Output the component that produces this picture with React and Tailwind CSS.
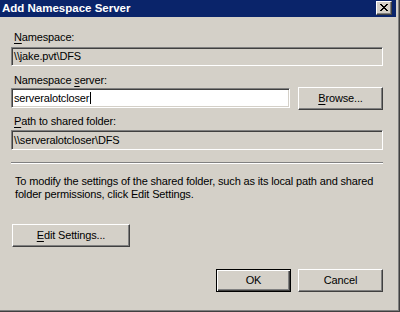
export default function App() {
  return (
    <div className="w-[400px] h-[312px] bg-[#d4d0c8] border-r border-b border-[#404040] shadow-[inset_-1px_-1px_0_#808080] pr-[3px] pb-[3px] flex flex-col text-[11px] leading-[13px] text-black tracking-[-0.15px] font-['Liberation_Sans',Arial,sans-serif] overflow-hidden">
      {/* Title bar */}
      <div className="h-[17px] shrink-0 bg-[#0a246a] flex items-start justify-between pl-[2px] pr-[4px]">
        <span className="text-white font-bold text-[11.5px] leading-[17px] tracking-[0px]">Add Namespace Server</span>
        <div className="mt-[1px] w-[16px] h-[14px] bg-[#d4d0c8] border border-t-white border-l-white border-b-[#404040] border-r-[#404040] shadow-[inset_-1px_-1px_0_#808080] flex items-center justify-center">
          <svg width="8" height="7" viewBox="0 0 8 7" shapeRendering="crispEdges" className="mb-[1px]">
            <path
              fill="#000"
              d="M0 0h2v1H0z M6 0h2v1H6z M1 1h2v1H1z M5 1h2v1H5z M2 2h4v1H2z M3 3h2v1H3z M2 4h4v1H2z M1 5h2v1H1z M5 5h2v1H5z M0 6h2v1H0z M6 6h2v1H6z"
            />
          </svg>
        </div>
      </div>

      {/* Client area */}
      <div className="flex flex-col pl-[11px] pr-[13px]">
        <div className="mt-[14px] pl-[3px] h-[13px]">
          <span className="underline decoration-1 underline-offset-[2px]">N</span>amespace:
        </div>
        <div className="mt-[3px] h-[19px] bg-[#d4d0c8] border border-t-[#808080] border-l-[#808080] border-b-white border-r-white shadow-[inset_1px_1px_0_#404040,inset_-1px_-1px_0_#d4d0c8] flex items-center pl-[2px]">
          {"\\\\jake.pvt\\DFS"}
        </div>

        <div className="mt-[8px] pl-[3px] h-[13px]">
          Namespace <span className="underline decoration-1 underline-offset-[2px]">s</span>erver:
        </div>
        <div className="flex items-start gap-[8px]">
          <div className="mt-[1px] w-[279px] h-[20px] bg-white border border-t-[#808080] border-l-[#808080] border-b-white border-r-white shadow-[inset_1px_1px_0_#404040,inset_-1px_-1px_0_#d4d0c8] flex items-center pl-[2px]">
            serveralotcloser
            <span className="inline-block w-[1px] h-[12px] bg-black ml-[1px]" />
          </div>
          <button className="w-[85px] h-[23px] bg-[#d4d0c8] border border-t-white border-l-white border-b-[#404040] border-r-[#404040] shadow-[inset_-1px_-1px_0_#808080] flex items-center justify-center">
            <span>
              <span className="underline decoration-1 underline-offset-[2px]">B</span>rowse...
            </span>
          </button>
        </div>

        <div className="mt-[5px] pl-[3px] h-[13px]">
          <span className="underline decoration-1 underline-offset-[2px]">P</span>ath to shared folder:
        </div>
        <div className="mt-[2px] h-[20px] bg-[#d4d0c8] border border-t-[#808080] border-l-[#808080] border-b-white border-r-white shadow-[inset_1px_1px_0_#404040,inset_-1px_-1px_0_#d4d0c8] flex items-center pl-[2px]">
          {"\\\\serveralotcloser\\DFS"}
        </div>

        <div className="mt-[12px] h-[2px] border-t border-t-[#808080] border-b border-b-white" />

        <p className="mt-[11px] pl-[4px]">
          To modify the settings of the shared folder, such as its local path and shared
          <br />
          folder permissions, click Edit Settings.
        </p>

        <button className="mt-[23px] ml-[1px] w-[118px] h-[23px] bg-[#d4d0c8] border border-t-white border-l-white border-b-[#404040] border-r-[#404040] shadow-[inset_-1px_-1px_0_#808080] flex items-center justify-center">
          <span>
            <span className="underline decoration-1 underline-offset-[2px]">E</span>dit Settings...
          </span>
        </button>

        <div className="mt-[22px] flex justify-end gap-[7px]">
          <button className="w-[75px] h-[23px] bg-[#d4d0c8] border border-black shadow-[inset_1px_1px_0_#ffffff,inset_-1px_-1px_0_#404040,inset_-2px_-2px_0_#808080] flex items-center justify-center">
            OK
          </button>
          <button className="w-[85px] h-[23px] bg-[#d4d0c8] border border-t-white border-l-white border-b-[#404040] border-r-[#404040] shadow-[inset_-1px_-1px_0_#808080] flex items-center justify-center">
            Cancel
          </button>
        </div>
      </div>
    </div>
  );
}
